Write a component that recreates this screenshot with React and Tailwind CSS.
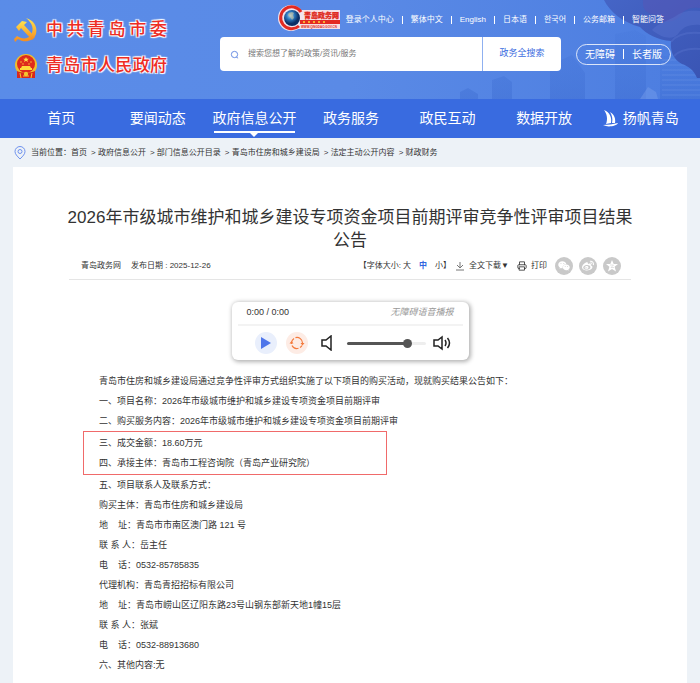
import React from "react";
import { FaWeixin, FaWeibo } from "react-icons/fa";
import { FiPrinter } from "react-icons/fi";

const topLinks = ["登录个人中心", "繁体中文", "English", "日本语", "한국어", "公务邮箱", "智能问答"];
const crumbs = ["首页", "政府信息公开", "部门信息公开目录", "青岛市住房和城乡建设局", "法定主动公开内容", "财政财务"];
const navItems = ["首页", "要闻动态", "政府信息公开", "政务服务", "政民互动", "数据开放"];

const intro = [
    "青岛市住房和城乡建设局通过竞争性评审方式组织实施了以下项目的购买活动，现就购买结果公告如下：",
    "一、项目名称：2026年市级城市维护和城乡建设专项资金项目前期评审",
    "二、购买服务内容：2026年市级城市维护和城乡建设专项资金项目前期评审",
];
const marked = ["三、成交金额：18.60万元", "四、承接主体：青岛市工程咨询院（青岛产业研究院）"];
const details = [
    "五、项目联系人及联系方式：",
    "购买主体：青岛市住房和城乡建设局",
    "地\u00a0\u00a0\u00a0 址：青岛市市南区澳门路 121 号",
    "联 系 人：岳主任",
    "电\u00a0\u00a0\u00a0 话：0532-85785835",
    "代理机构：青岛青招招标有限公司",
    "地\u00a0\u00a0\u00a0 址：青岛市崂山区辽阳东路23号山钢东部新天地1幢15层",
    "联 系 人：张斌",
    "电\u00a0\u00a0\u00a0 话：0532-88913680",
    "六、其他内容:无",
];

function PartyEmblem() {
    return (
        <svg viewBox="0 0 24 26" className="w-6 h-7 shrink-0">
            <defs>
                <linearGradient id="gold" x1="0" y1="0" x2="0" y2="1">
                    <stop offset="0" stopColor="#ffe34d" />
                    <stop offset="1" stopColor="#f58a1f" />
                </linearGradient>
            </defs>
            <path d="M12 1C19 3 24 9 22 17C19 25 10 26 4 22L1 25L0 22L3 19C9 23 16 22 18 16C20 10 17 5 12 1Z" fill="url(#gold)" />
            <path d="M2 10L8 4L13 5L10 8L21 20L18 23L7 11L5 14Z" fill="url(#gold)" />
        </svg>
    );
}

function NationalEmblem() {
    return (
        <svg viewBox="0 0 24 26" className="w-6 h-7 shrink-0">
            <circle cx="12" cy="12" r="11" fill="#eebd2c" />
            <circle cx="12" cy="11" r="9" fill="#de2a1c" />
            <path d="M12 4l.8 1.800h2l-1.500 1.200.6 1.900-1.900-1.100-1.900 1.100.6-1.900L9.200 5.800h2z" fill="#ffe04a" />
            <g fill="#ffd83a">
                <circle cx="7" cy="9" r=".7" />
                <circle cx="17" cy="9" r=".7" />
                <circle cx="9" cy="11" r=".7" />
                <circle cx="15" cy="11" r=".7" />
                <path d="M8 13h8l1 2h1v2H6v-2h1z" />
            </g>
            <path d="M3 18c4 2 14 2 18 0v7H3z" fill="#d9281b" />
            <path d="M6 20l1 5M18 20l-1 5M9 23h6" stroke="#f3c52f" />
            <circle cx="12" cy="21" r="2.200" fill="#f3c52f" />
        </svg>
    );
}

function PortalLogo() {
    return (
        <svg viewBox="0 0 64 28" className="w-16 h-7 shrink-0">
            <defs>
                <radialGradient id="globe" cx=".4" cy=".35">
                    <stop offset="0" stopColor="#a9d7f5" />
                    <stop offset=".5" stopColor="#2c78bd" />
                    <stop offset="1" stopColor="#0b2f66" />
                </radialGradient>
            </defs>
            <rect x="14" y="6" width="48" height="19" fill="#f7e0e4" />
            <circle cx="13" cy="14" r="13" fill="#f1e4ee" />
            <path d="M23 8A11 11 0 1 0 21 22" fill="none" stroke="#e32a22" strokeWidth="3" />
            <circle cx="14" cy="14" r="8" fill="url(#globe)" />
            <path d="M11 9l3-1 2 1-1 2 1 3-2 2-2-3-2-2z" fill="#cfc49a" opacity=".6" />
            <rect x="22" y="16" width="40" height="4" fill="#e32a22" />
            <g fill="#ffd93a">
                <circle cx="26" cy="18" r="1" />
                <circle cx="31" cy="18" r="1" />
                <circle cx="36" cy="18" r="1" />
                <circle cx="41" cy="18" r="1" />
                <circle cx="46" cy="18" r="1" />
            </g>
            <text x="26" y="14" fontSize="7" fontWeight="900" fill="#df2a20" stroke="#df2a20" strokeWidth=".3" className="font-['Noto_Sans_CJK_SC',sans-serif]">青岛政务网</text>
            <text x="23" y="24" fontSize="3" fontWeight="700" fill="#df2a20">WWW.QINGDAO.GOV.CN</text>
        </svg>
    );
}

function HeaderArt() {
    return (
        <svg viewBox="0 0 360 99" className="absolute right-0 top-0 w-[360px] h-[99px]">
            <defs>
                <linearGradient id="tower" x1="0" y1="0" x2="0" y2="1">
                    <stop offset="0" stopColor="#3f70d4" stopOpacity=".15" />
                    <stop offset="1" stopColor="#3a69cf" stopOpacity=".4" />
                </linearGradient>
                <linearGradient id="petal" x1="0" y1="0" x2="1" y2="1">
                    <stop offset="0" stopColor="#4565c6" />
                    <stop offset="1" stopColor="#3a55b4" />
                </linearGradient>
            </defs>
            <g fill="url(#tower)">
                <path d="M210 65l22-10 13 18v26h-35zM152 80l12-4 8 6v17h-20zM120 92l8-4 10 6v5h-18zM275 34l20-4 11 6v63h-31z" />
                <path d="M320 56h40v43h-40z" />
            </g>
            <g stroke="#8caef2" opacity=".25">
                <path d="M322 60h38M322 65h38M322 70h38M322 75h38M322 80h38M322 85h38M322 90h38M322 95h38" />
            </g>
            <path d="M300 99l8-12 8 5 2 7z" fill="#7ea3ee" opacity=".4" />
            <path d="M264 0C270 12 282 22 300 27C306 34 318 40 331 41C330 52 334 60 342 64C348 66 354 70 357 78L360 78V0z" fill="url(#petal)" />
            <path d="M303 0c-1 10 4 14 14 15c5 1 7 3 7 7c10 0 16-4 19-10c5-4 10-5 17-4V0z" fill="#5a55b4" opacity=".45" />
            <path d="M312 30c6-7 16-9 24-14c6-5 14-6 24-5v14c-12-1-18 3-22 9c-4 5-14 6-26-4z" fill="#5470cc" opacity=".55" />
            <path d="M331 42c6-8 16-10 29-9M334 56c6-6 14-8 26-7" fill="none" stroke="#5f77d2" strokeWidth="2" opacity=".35" />
        </svg>
    );
}

function SailIcon() {
    return (
        <svg viewBox="0 0 16 17" className="w-4 h-[17px]" fill="#fff">
            <path d="M1 0C7 2 9 8 8 13L3 14C5 9 4 4 1 0Z" />
            <path d="M7 2C11 4 13 9 12 13L9 13C10 9 9 5 7 2Z" />
            <path d="M0 15c5 0 10-1 15-2c-1 3-9 4-12 3z" />
        </svg>
    );
}

function Lines({ items }) {
    return items.map((line) => <p key={line}>{line}</p>);
}

export default function App() {
    return (
        <div className="w-full min-h-screen bg-[#edf2f7] font-['Liberation_Sans','Noto_Sans_CJK_SC','Noto_Sans_CJK_KR',sans-serif] text-[#333]">
            {/* Header */}
            <header className="relative h-[99px] overflow-hidden bg-gradient-to-r from-[#5a8ce8] via-[#5a8ae6] to-[#4c7de0]">
                <HeaderArt />
                <div className="relative flex px-[14px]">
                    <div className="w-[206px] shrink-0 pt-4 text-[17px] leading-7 font-medium text-[#ee2c24] flex flex-col gap-2">
                        <div className="flex items-center gap-2">
                            <PartyEmblem />
                            <span className="w-[121px] whitespace-nowrap [text-align-last:justify] [text-shadow:1px_1px_1px_#fff,-1px_1px_1px_#fff,1px_-1px_1px_#fff,-1px_-1px_1px_#fff]">中共青岛市委</span>
                        </div>
                        <div className="flex items-center gap-2">
                            <NationalEmblem />
                            <span className="w-[121px] whitespace-nowrap [text-align-last:justify] [text-shadow:1px_1px_1px_#fff,-1px_1px_1px_#fff,1px_-1px_1px_#fff,-1px_-1px_1px_#fff]">青岛市人民政府</span>
                        </div>
                    </div>
                    <div className="flex-1 pt-1">
                        <div className="flex items-center justify-end pr-[22px] text-[8px] text-white">
                            <PortalLogo />
                            <nav className="flex items-center pl-1 pt-1">
                                {topLinks.map((link, i) => (
                                    <React.Fragment key={link}>
                                        {i > 0 && <span className="mx-2 w-px h-2 bg-white" />}
                                        <a href="#" className="whitespace-nowrap">{link}</a>
                                    </React.Fragment>
                                ))}
                            </nav>
                        </div>
                        <div className="flex items-center mt-[5px]">
                            <form className="flex w-[341px] h-[34px] bg-white rounded-sm overflow-hidden">
                                <label htmlFor="search" className="flex items-center pl-[10px] pr-[9px]">
                                    <svg viewBox="0 0 10 10" className="w-[9px] h-[9px]" fill="none" stroke="#5b82e0">
                                        <circle cx="5" cy="5" r="3.500" />
                                        <path d="M7 8l2 1" />
                                    </svg>
                                </label>
                                <input id="search" className="flex-1 min-w-0 text-[8px] outline-none placeholder:text-[#777]" placeholder="搜索您想了解的政策/资讯/服务" />
                                <button type="button" className="w-[79px] border-l border-[#8fb0f0] text-[9px] text-[#3a6be0]">政务全搜索</button>
                            </form>
                            <div className="ml-[15px] flex items-center h-[21px] px-2 rounded-full border border-white/80 text-[10px] text-white whitespace-nowrap">
                                <button type="button">无障碍</button>
                                <span className="mx-2 w-px h-[10px] bg-white" />
                                <button type="button">长者版</button>
                            </div>
                        </div>
                    </div>
                </div>
            </header>

            {/* Main navigation */}
            <nav className="h-[39px] bg-[#396be0] pl-[13px] pr-[11px] grid grid-cols-7 text-white text-[14px]">
                {navItems.map((item) => (
                    <a key={item} href="#" className="relative flex justify-center items-center whitespace-nowrap">
                        {item}
                        {item === "政府信息公开" && (
                            <span className="absolute left-2 right-2 bottom-[5px] h-[2px] bg-white">
                                <span className="absolute left-1/2 -translate-x-1/2 top-[2px] border-x-4 border-t-4 border-x-transparent border-t-white" />
                            </span>
                        )}
                    </a>
                ))}
                <a href="#" className="flex justify-center items-center gap-1 whitespace-nowrap">
                    <SailIcon />
                    扬帆青岛
                </a>
            </nav>

            {/* Breadcrumb */}
            <div className="flex items-center h-[29px] px-[14px] text-[8px] whitespace-nowrap">
                <svg viewBox="0 0 12 14" className="w-3 h-[14px] mr-[5px]" fill="none" stroke="#6f92ee">
                    <path d="M6 13C3 10 1 8 1 5.500a5 5 0 0 1 10 0C11 8 9 10 6 13z" />
                    <circle cx="6" cy="5.500" r="2" />
                </svg>
                <span>当前位置：</span>
                {crumbs.map((crumb, i) => (
                    <span key={crumb} className="mr-1">
                        {i > 0 && "> "}
                        <a href="#">{crumb}</a>
                    </span>
                ))}
            </div>

            {/* Article */}
            <main className="mx-[13px] bg-white px-14 pt-[39px] pb-4">
                <h1 className="-mx-1 text-[17px] leading-[23px] text-center">
                    2026年市级城市维护和城乡建设专项资金项目前期评审竞争性评审项目结果公告
                </h1>
                <div className="flex items-center justify-between h-7 pl-3 pr-[10px] border-b border-[#e5e5e5] text-[8px] whitespace-nowrap">
                    <div className="flex gap-[10px]">
                        <span>青岛政务网</span>
                        <span>发布日期 : 2025-12-26</span>
                    </div>
                    <div className="flex items-center">
                        <span>【字体大小:</span>
                        <button type="button" className="ml-[2px]">大</button>
                        <button type="button" className="ml-2 font-bold text-[#2f65e0]">中</button>
                        <button type="button" className="ml-2">小</button>
                        <span>】</span>
                        <button type="button" className="ml-1 flex items-center gap-1">
                            <svg viewBox="0 0 10 10" className="w-[10px] h-[10px]" fill="none" stroke="#777">
                                <path d="M5 1v6M2 4l3 3 3-3M1 9h8" />
                            </svg>
                            <span className="flex items-center">全文下载<span className="text-[8px]">▼</span></span>
                        </button>
                        <button type="button" className="ml-2 flex items-center gap-1">
                            <FiPrinter className="w-[10px] h-[10px]" />
                            打印
                        </button>
                        <div className="ml-2 flex gap-[6px] text-white">
                            <button type="button" aria-label="微信" className="w-[18px] h-[18px] rounded-full bg-[#c9c9c9] flex items-center justify-center">
                                <FaWeixin className="w-3 h-3" />
                            </button>
                            <button type="button" aria-label="微博" className="w-[18px] h-[18px] rounded-full bg-[#c9c9c9] flex items-center justify-center">
                                <FaWeibo className="w-3 h-3" />
                            </button>
                            <button type="button" aria-label="收藏" className="w-[18px] h-[18px] rounded-full bg-[#c9c9c9] flex items-center justify-center">
                                <svg viewBox="0 0 12 12" className="w-3 h-3" fill="#fff">
                                    <path d="M6 0l1.700 4H12L8.600 6.800 10 11.500 6 9 2 11.500 3.400 6.800 0 4h4.300z" />
                                    <path d="M4 5h3.500L5 7.500h3" fill="none" stroke="#c9c9c9" strokeWidth=".5" />
                                </svg>
                            </button>
                        </div>
                    </div>
                </div>

                {/* Audio player */}
                <div className="w-[237px] mx-auto mt-[22px] rounded-md bg-white px-[6px] shadow-[1px_1px_4px_1px_rgba(0,0,0,0.3)]">
                    <div className="flex items-center justify-between h-6 px-[9px] border-b-2 border-[#f3f3f3] text-[9px]">
                        <span>0:00 / 0:00</span>
                        <span className="italic text-[#999]">无障碍语音播报</span>
                    </div>
                    <div className="flex items-center h-[34px] pl-[17px]">
                        <button type="button" aria-label="播放" className="w-[22px] h-[22px] rounded-full bg-[#e9effc] flex items-center justify-center">
                            <svg viewBox="0 0 10 12" className="w-[10px] h-3" fill="#4f76ea"><path d="M0 0l10 6-10 6z" /></svg>
                        </button>
                        <button type="button" aria-label="重播" className="ml-[9px] w-[22px] h-[22px] rounded-full bg-[#fdece5] flex items-center justify-center">
                            <svg viewBox="0 0 16 14" className="w-4 h-[14px]" fill="none" stroke="#f47a3c" strokeWidth="1.200">
                                <path d="M2.500 8V7A5.500 5.500 0 0 1 5 2.400M6.500 1.700A5.500 5.500 0 0 1 13.500 7V8M13 9.500A5.500 5.500 0 0 1 11 11.600M9.500 12.300A5.500 5.500 0 0 1 3 9.500" />
                                <path d="M11.500 7h4l-2 2.500zM.5 7.500h4L2.500 5z" fill="#f47a3c" stroke="none" />
                            </svg>
                        </button>
                        <svg viewBox="0 0 12 16" className="ml-[13px] w-3 h-4" fill="none" stroke="#222" strokeWidth="1.500">
                            <path d="M10 1v14L5 11H1V5h4z" />
                        </svg>
                        <label className="ml-[14px] flex items-center w-[79px] h-4">
                            <input type="range" aria-label="音量" defaultValue="80" className="w-full h-[3px] appearance-none rounded-full bg-gradient-to-r from-[#555] from-78% to-[#eee] to-78% [&::-webkit-slider-thumb]:appearance-none [&::-webkit-slider-thumb]:w-[9px] [&::-webkit-slider-thumb]:h-[9px] [&::-webkit-slider-thumb]:rounded-full [&::-webkit-slider-thumb]:bg-[#555]" />
                        </label>
                        <svg viewBox="0 0 18 16" className="ml-[7px] w-[18px] h-4" fill="none" stroke="#222" strokeWidth="1.500">
                            <path d="M9 2v12L5 11H1V5h4zM12 5q2 3 0 6M14.500 3q4 5 0 10" />
                        </svg>
                    </div>
                </div>

                {/* Body text */}
                <div className="mt-[11px] px-[30px] text-[9px] leading-5">
                    <Lines items={intro} />
                    <div className="-mx-4 w-[304px] max-w-full border border-[#f06a6a] py-px px-[15px]">
                        <Lines items={marked} />
                    </div>
                    <Lines items={details} />
                </div>
            </main>
        </div>
    );
}
